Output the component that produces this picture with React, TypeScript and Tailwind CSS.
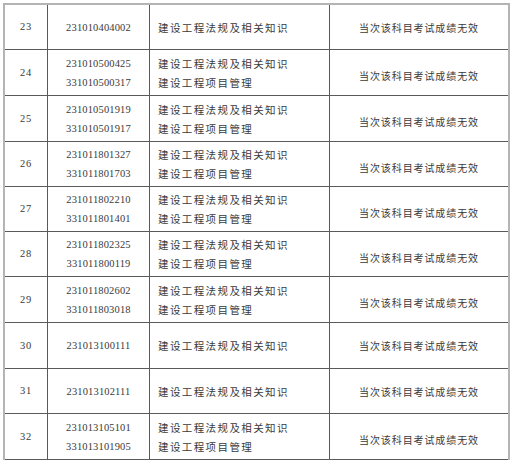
import React from 'react';

type Row = {
  no: number;
  ids: string[];
  subjects: string[];
  h: string;
};

const LAW = '建设工程法规及相关知识';
const PM = '建设工程项目管理';

const rows: Row[] = [
  { no: 23, ids: ['231010404002'], subjects: [LAW], h: 'h-[45px]' },
  { no: 24, ids: ['231010500425', '331010500317'], subjects: [LAW, PM], h: 'h-[46px]' },
  { no: 25, ids: ['231010501919', '331010501917'], subjects: [LAW, PM], h: 'h-[46px]' },
  { no: 26, ids: ['231011801327', '331011801703'], subjects: [LAW, PM], h: 'h-[45px]' },
  { no: 27, ids: ['231011802210', '331011801401'], subjects: [LAW, PM], h: 'h-[45px]' },
  { no: 28, ids: ['231011802325', '331011800119'], subjects: [LAW, PM], h: 'h-[45px]' },
  { no: 29, ids: ['231011802602', '331011803018'], subjects: [LAW, PM], h: 'h-[46px]' },
  { no: 30, ids: ['231013100111'], subjects: [LAW], h: 'h-[46px]' },
  { no: 31, ids: ['231013102111'], subjects: [LAW], h: 'h-[45px]' },
  { no: 32, ids: ['231013105101', '331013101905'], subjects: [LAW, PM], h: 'h-[46px]' },
];

const serif = "font-['Liberation_Serif','Noto_Sans_CJK_SC',serif]";
const cjk = "font-['Noto_Sans_CJK_SC',sans-serif]";

export default function App() {
  return (
    <div className="w-[513px] h-[464px] overflow-hidden bg-white pt-[3px] pl-[3px]">
      <div className="w-[507px] border-t-2 border-l-2 border-r-2 border-[#b4b4b4] text-[#3a3a3a]">
        {rows.map((r) => {
          const two = r.ids.length > 1;
          return (
            <div key={r.no} className={`flex ${r.h} border-b border-[#5a5a5a]`}>
              <div
                className={`w-[43px] shrink-0 border-r border-[#5a5a5a] flex items-center justify-center ${serif} text-[10.5px] tracking-[0.8px]`}
              >
                {r.no}
              </div>
              <div
                className={`w-[102px] shrink-0 border-r border-[#5a5a5a] flex flex-col items-center justify-center ${serif} text-[10.5px] tracking-[0.15px] leading-[19px]`}
              >
                {r.ids.map((id) => (
                  <span key={id}>{id}</span>
                ))}
              </div>
              <div
                className={`w-[180px] shrink-0 border-r border-[#5a5a5a] flex flex-col justify-center pl-[8px] ${cjk} text-[10.5px] tracking-[1.4px] leading-[19px]`}
              >
                {r.subjects.map((s) => (
                  <span key={s}>{s}</span>
                ))}
              </div>
              <div
                className={`flex-1 flex items-center justify-center ${cjk} text-[10px] tracking-[0.9px] ${two ? 'pt-[6px]' : ''}`}
              >
                当次该科目考试成绩无效
              </div>
            </div>
          );
        })}
      </div>
    </div>
  );
}
